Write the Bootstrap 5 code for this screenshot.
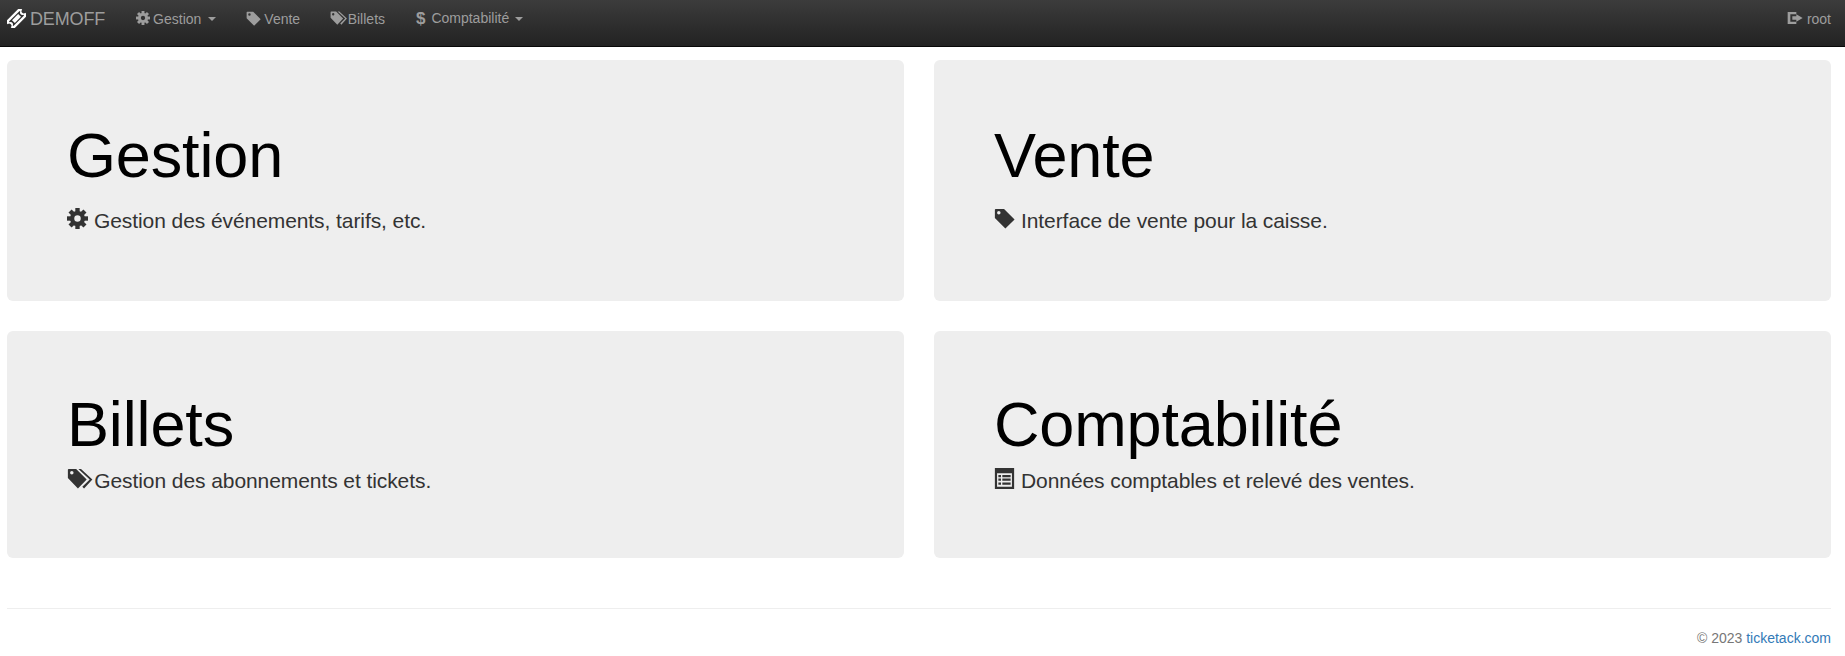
<!DOCTYPE html>
<html lang="fr"><head><meta charset="utf-8"><title>DEMOFF</title>
<link href="https://cdn.jsdelivr.net/npm/bootstrap@5.3.0/dist/css/bootstrap.min.css" rel="stylesheet">
<style>
body{font-family:"Helvetica Neue",Helvetica,Arial,"Liberation Sans",sans-serif;font-size:14px;color:#333;line-height:1.42857;background:#fff}
.topbar{height:47px;background:linear-gradient(to bottom,#3c3c3c,#222);border-bottom:1px solid #080808;padding:0 14px 7px 7px;color:#9d9d9d}
.topbar a{color:#9d9d9d;text-decoration:none;display:flex;align-items:center;white-space:nowrap}
.topbar a svg{margin-bottom:2px}
.topbrand{font-size:18px;margin-right:31px;gap:4px;letter-spacing:-.15px}
.topbrand svg{color:#fff;font-size:19px}
.toplink{margin-right:30px;gap:3px}
.toplink-tags{margin-right:31px}
.tagic{font-size:15px}
.dollar{font-size:17px;font-weight:700;margin-right:2px}
.caretx{display:inline-block;width:0;height:0;margin-left:4px;border-top:4px solid;border-left:4px solid transparent;border-right:4px solid transparent}
.caret-far{margin-left:6px}
.ic{width:1em;height:1em;fill:currentColor;flex:none}
.ic-wide{width:1.25em}
.outic{font-size:16px}
.pagewrap{padding:13px 14px 0 7px}
.cardgrid{display:grid;grid-template-columns:1fr 1fr;column-gap:30px;row-gap:30px}
.hero{background:#eee;border-radius:6px;padding:48px 60px}
.hero-a{height:241px}
.hero-b{height:227px}
.hero h1{font-family:inherit;font-size:63px;font-weight:500;line-height:1.1;margin:13px 0 16px;color:#000;letter-spacing:-.15px}
.hero-b h1{margin:11px 0 7px}
.hero p{font-size:21px;font-weight:200;margin:0 0 15px;display:flex;align-items:center;line-height:30px;letter-spacing:-.08px}
.hero p svg{margin:0 6px 5px 0}
.hero p svg.ic-wide{margin-right:1px}
.foot{margin-top:50px;border-top:1px solid #eee;padding-top:20px;text-align:right;font-size:14px;color:#777}
.foot a{color:#337ab7;text-decoration:none}
</style></head><body>
<svg width="0" height="0" class="position-absolute">
<defs>
<symbol id="i-cog" viewBox="0 0 24 24"><circle cx="12" cy="12" r="6.200" fill="none" stroke="currentColor" stroke-width="5"/><g><rect x="9.500" y="0" width="5" height="5"/><rect x="9.500" y="19" width="5" height="5"/><rect x="0" y="9.500" width="5" height="5"/><rect x="19" y="9.500" width="5" height="5"/></g><g transform="rotate(45 12 12)"><rect x="9.500" y="0" width="5" height="5"/><rect x="9.500" y="19" width="5" height="5"/><rect x="0" y="9.500" width="5" height="5"/><rect x="19" y="9.500" width="5" height="5"/></g></symbol>
<symbol id="i-tag" viewBox="0 0 24 24"><path fill-rule="evenodd" d="M1 2C1 1.400 1.400 1 2 1H11.500L23.500 13 13 23.500 1 11.500zM5.500 3.500a2 2 0 100 4 2 2 0 000-4z"/></symbol>
<symbol id="i-tags" viewBox="0 0 30 24"><path fill-rule="evenodd" d="M1 2C1 1.400 1.400 1 2 1H10.500L22.500 13 12.500 23.500 1 11.500zM5.500 3.500a2 2 0 100 4 2 2 0 000-4z"/><path d="M13 1h3l13 12-9.500 10.500-2-2L26 13z"/></symbol>
<symbol id="i-list" viewBox="0 0 24 24"><path fill-rule="evenodd" d="M1 0h22v24H1zM3.500 6v15.500h17V6zM5 8h3v2.500H5zM9.500 8H19v2.500H9.500zM5 12h3v2.500H5zM9.500 12H19v2.500H9.500zM5 16.500h3V19H5zM9.500 16.500H19V19H9.500z"/></symbol>
<symbol id="i-out" viewBox="0 0 24 24"><path d="M1 3h13v3.500H5v11h9V21H1zM14 6.500l9.500 5.500-9.500 5.500V14.500H8v-5h6z"/></symbol>
<symbol id="i-ticket" viewBox="0 0 24 24"><g transform="rotate(-45 12 12)"><path fill-rule="evenodd" d="M-1 5H25V9.200a2.800 2.800 0 000 5.600V19H-1V14.800a2.800 2.800 0 000-5.600zM2.500 8V9.300a2.800 2.800 0 010 5.400V16H21.500V14.700a2.800 2.800 0 010-5.400V8z"/><path d="M6.500 9.500H17.500V14.500H6.500z"/></g></symbol>
</defs></svg>
<nav class="topbar d-flex align-items-center justify-content-between">
<div class="d-flex align-items-center">
<a class="topbrand" href="#"><svg class="ic"><use href="#i-ticket"/></svg>DEMOFF</a>
<a class="toplink" href="#"><svg class="ic"><use href="#i-cog"/></svg>Gestion<span class="caretx"></span></a>
<a class="toplink" href="#"><svg class="ic tagic"><use href="#i-tag"/></svg>Vente</a>
<a class="toplink toplink-tags gap-0" href="#"><svg class="ic ic-wide"><use href="#i-tags"/></svg>Billets</a>
<a class="toplink gap-0" href="#"><span class="dollar">$</span>&nbsp;Comptabilité<span class="caretx caret-far"></span></a>
</div>
<a href="#" class="gap-1"><svg class="ic outic"><use href="#i-out"/></svg>root</a>
</nav>
<div class="pagewrap">
<div class="cardgrid">
<div class="hero hero-a"><h1>Gestion</h1><p><svg class="ic"><use href="#i-cog"/></svg>Gestion des événements, tarifs, etc.</p></div>
<div class="hero hero-a"><h1>Vente</h1><p><svg class="ic"><use href="#i-tag"/></svg>Interface de vente pour la caisse.</p></div>
<div class="hero hero-b"><h1>Billets</h1><p><svg class="ic ic-wide"><use href="#i-tags"/></svg>Gestion des abonnements et tickets.</p></div>
<div class="hero hero-b"><h1>Comptabilité</h1><p><svg class="ic"><use href="#i-list"/></svg>Données comptables et relevé des ventes.</p></div>
</div>
<div class="foot">© 2023 <a href="#">ticketack.com</a></div>
</div>
<script src="https://cdn.jsdelivr.net/npm/bootstrap@5.3.0/dist/js/bootstrap.bundle.min.js"></script>
</body></html>
